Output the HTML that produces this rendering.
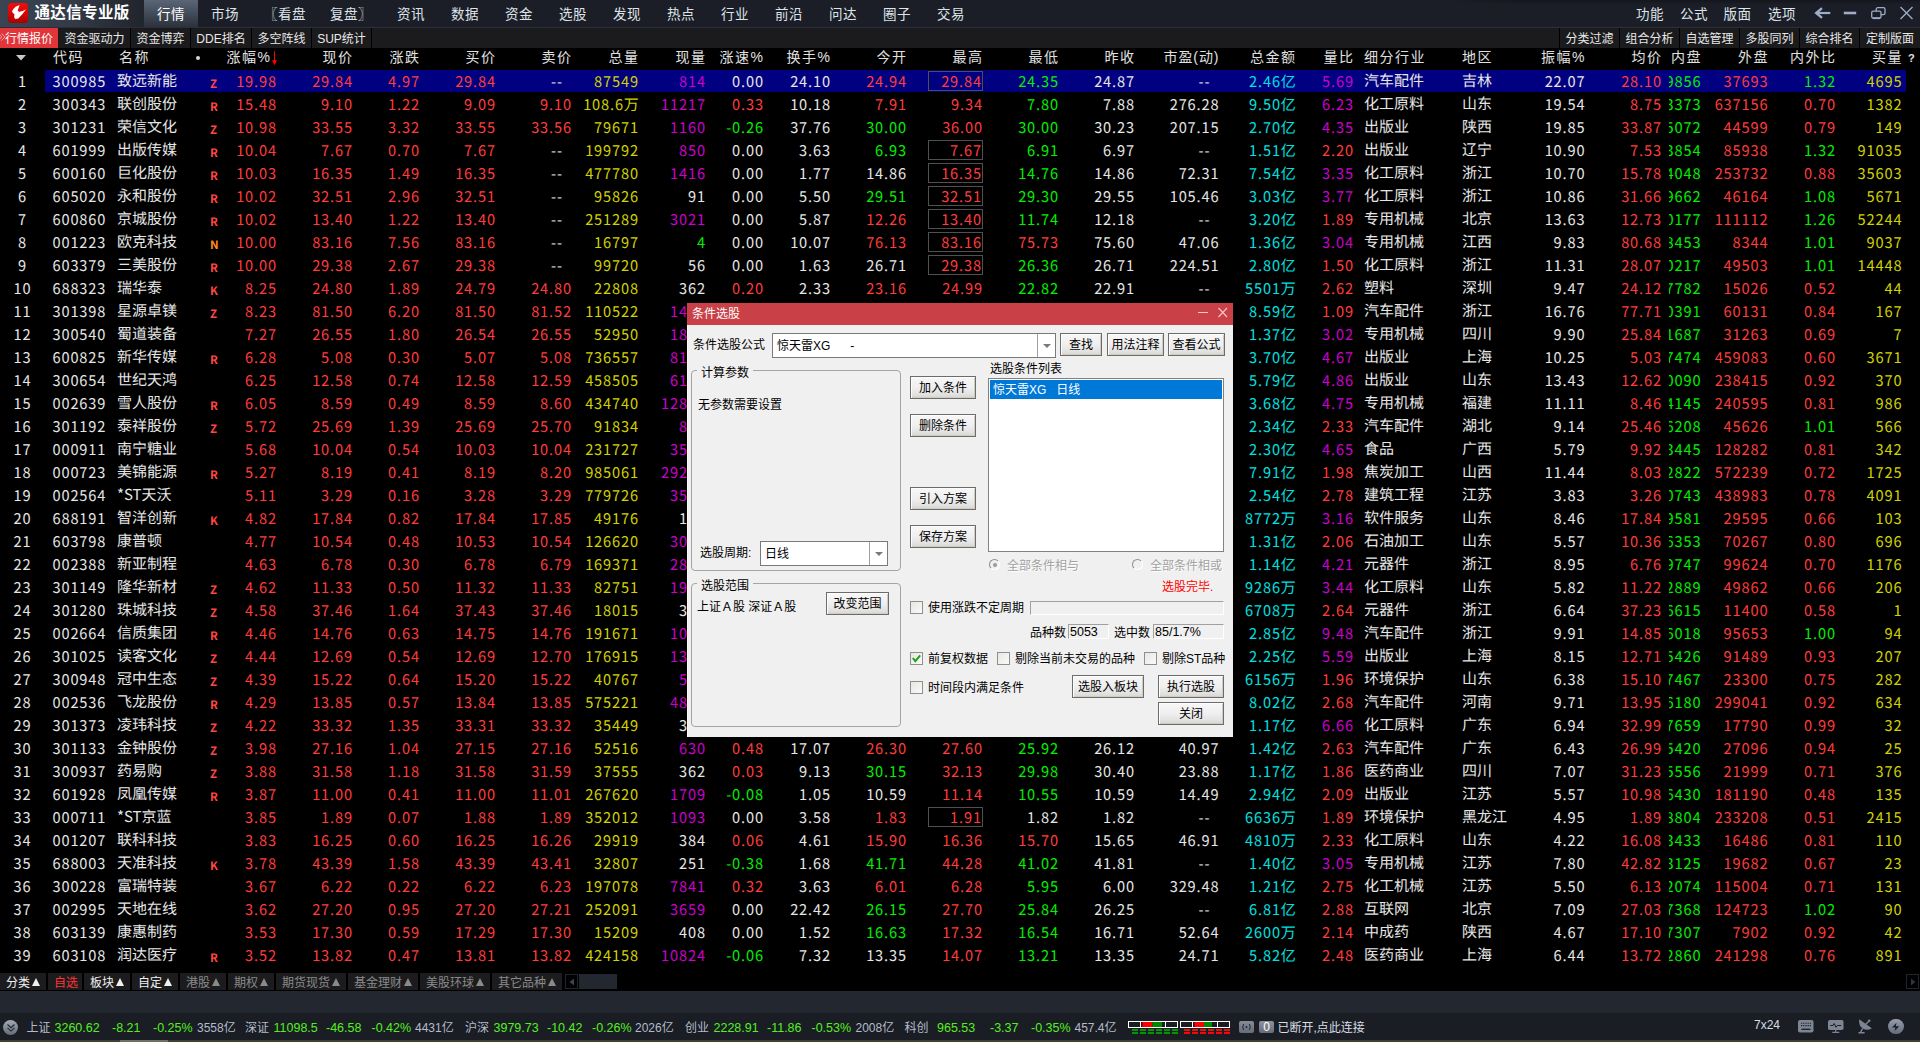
<!DOCTYPE html>
<html lang="zh"><head><meta charset="utf-8"><title>通达信专业版</title>
<style>

*{margin:0;padding:0;box-sizing:border-box}
html,body{width:1920px;height:1042px;overflow:hidden;background:#000}
body{font-family:"Liberation Sans","Noto Sans CJK SC",sans-serif;color:#e6e6e6}
#app{position:relative;width:1920px;height:1042px;overflow:hidden;background:#000}
.abs{position:absolute}
/* title bar */
#title{position:absolute;left:0;top:0;width:1920px;height:27px;background:#1b1e26}
#title .lg{position:absolute;left:0;top:0;width:144px;height:27px;background:linear-gradient(90deg,#3b4452 0%,#333b47 50%,#20242c 100%)}
#title .logo{position:absolute;left:8px;top:3px;width:20px;height:20px;border-radius:3.5px;background:linear-gradient(180deg,#f20d0d 0%,#d40606 55%,#a80000 100%)}
#title .nm{position:absolute;left:34.5px;top:0;height:25px;line-height:25px;font-size:15.5px;font-weight:bold;color:#fff;letter-spacing:.35px;white-space:nowrap}
#title .act{position:absolute;left:144px;top:0;width:54px;height:27px;background:linear-gradient(180deg,#5a6576 0%,#454e5c 45%,#2c323c 100%)}
.mi{position:absolute;top:0;height:27px;line-height:29px;font-size:13.5px;letter-spacing:.5px;color:#dfe3ea;white-space:nowrap;transform:translateX(-50%)}
#tline{position:absolute;left:0;top:27px;width:1920px;height:1px;background:#2a2f39}
#bar2{position:absolute;left:0;top:28px;width:1920px;height:20px;background:#1b1b1d}
.t2{position:absolute;top:0;height:20px;line-height:22px;font-size:12px;color:#e8e8e8;text-align:center;white-space:nowrap;border-right:1px solid #000}
.t2.on{background:#e1353a;color:#fff;border-right:none}
/* table */
#hdr{position:absolute;left:0;top:48px;width:1920px;height:22px;font-size:14px;line-height:22px;color:#e0e0e0}
.r{font-family:"Noto Sans CJK SC","Liberation Sans",sans-serif;text-rendering:geometricPrecision;position:absolute;left:0;width:1920px;height:23px;line-height:23px;font-size:14.6px;letter-spacing:0.85px}
.r.sel:before{content:"";position:absolute;left:45px;top:0;width:1861px;height:22px;background:#000080}
.c{position:absolute;top:.4px;white-space:nowrap}.c.zh{top:-1.3px}
.h{position:absolute;top:-2px;white-space:nowrap;letter-spacing:1.5px;margin-right:-1.5px}
.zh{font-size:15px;letter-spacing:0}
.fl{font-size:11.5px;font-weight:bold;letter-spacing:0;top:3px;color:#ff4646}
.rd{color:#ff3c3c}.gn{color:#00f000}.yl{color:#d2d200}.mg{color:#cc00cc}.cy{color:#00e0e0}.wh{color:#e6e6e6}
.bx{position:absolute;left:928px;top:1px;width:55px;height:20px;border:1px solid #505050}

.c-zf{right:1643.15px}
.h-zf{right:1644.00px}
.c-price{right:1567.15px}
.h-price{right:1568.00px}
.c-chg{right:1500.15px}
.h-chg{right:1501.00px}
.c-buy{right:1424.15px}
.h-buy{right:1425.00px}
.c-sell{right:1348.15px}
.h-sell{right:1349.00px}
.c-vol{right:1281.15px}
.h-vol{right:1282.00px}
.c-cur{right:1214.15px}
.h-cur{right:1215.00px}
.c-speed{right:1156.15px}
.h-speed{right:1157.00px}
.c-turn{right:1089.15px}
.h-turn{right:1090.00px}
.c-open{right:1013.15px}
.h-open{right:1014.00px}
.c-high{right:937.15px}
.h-high{right:938.00px}
.c-low{right:861.15px}
.h-low{right:862.00px}
.c-prev{right:785.15px}
.h-prev{right:786.00px}
.c-pe{right:700.65px}
.h-pe{right:701.50px}
.c-amount{right:624.15px}
.h-amount{right:625.00px}
.c-lb{right:566.15px}
.h-lb{right:567.00px}
.c-amp{right:334.65px}
.h-amp{right:335.50px}
.c-avg{right:258.15px}
.h-avg{right:259.00px}
.c-inner{right:218.65px}
.h-inner{right:219.50px}
.c-outer{right:151.65px}
.h-outer{right:152.50px}
.c-ratio{right:84.15px}
.h-ratio{right:85.00px}
.c-buyvol{right:17.65px}
.h-buyvol{right:18.50px}
.c-code{left:52.50px}
.c-name{left:117.00px}
.c-ind{left:1364.00px}
.c-reg{left:1462.00px}
.c-seq{left:0;width:45px;text-align:center}
.c-fl{left:210px}
.clip{position:absolute;left:1668.5px;top:0;width:33px;height:23px;overflow:hidden}.clip .c{right:0.15px}
#btabs{position:absolute;left:0;top:973px;width:1920px;height:17px;background:#000}
.bt{position:absolute;top:0;height:17px;line-height:20px;font-size:12px;color:#f0f0f0;background:#1c1c1e;padding-left:6px;white-space:nowrap;border-right:1px solid #000}
.bt.g{color:#8a8a8a}
.tri{display:inline-block;width:0;height:0;border-left:4.5px solid transparent;border-right:4.5px solid transparent;border-bottom:8px solid #f0f0f0;margin-left:2px;vertical-align:1px}
.bt.g .tri{border-bottom-color:#8a8a8a}
#band{position:absolute;left:0;top:991px;width:1920px;height:22px;background:#232830}
#status{position:absolute;left:0;top:1013px;width:1920px;height:27px;background:#1a1d24}
.s{position:absolute;top:0;height:27px;line-height:31px;font-size:12px;white-space:nowrap}
.s.l{color:#b4bccb}.s.g{color:#55ee22;font-size:12.5px}
#edge{position:absolute;left:0;top:1040px;width:1920px;height:2px;background:#3d402f}
#edge span{position:absolute;left:120px;top:0;width:48px;height:2px;background:#6f7067}
/* dialog */
#dlg{position:absolute;left:687px;top:303px;width:546px;height:434px;background:#f0f0f0;color:#000;font-size:12px;box-shadow:inset 1px 0 0 #fafafa}
#dlg .abs{position:absolute}
.dt{position:absolute;left:0;top:0;width:546px;height:21.5px;background:#c94047}
.dtt{position:absolute;left:5px;top:0;line-height:23px;color:#fff;font-size:12px}
.dl{position:absolute;line-height:20px;height:18px;white-space:nowrap;font-size:12px}
.gl{background:#f0f0f0;padding:0 4px}
.dis{color:#a2a2a2;text-shadow:1px 1px 0 #fff}
.cb{position:absolute;background:#fff;border:1px solid #7a7a7a}
.cbt{position:absolute;top:0;line-height:25px;font-size:12px;white-space:nowrap}
.cbs{position:absolute;top:0;width:1px;height:23px;background:#a0a0a0}
.cba{position:absolute;top:10px;width:0;height:0;border-left:4px solid transparent;border-right:4px solid transparent;border-top:4px solid #7a7a7a}
.btn{position:absolute;border:1px solid #6c6c6c;box-shadow:inset 1px 1px 0 #fdfdfd,inset -1px -1px 0 #cfccc2;background:linear-gradient(180deg,#f7f7f7 0%,#efefef 50%,#e3e3e3 80%,#d9d6cd 100%);text-align:center;line-height:22px;font-size:12px;white-space:nowrap}
.gb{position:absolute;border:1px solid #a5a5a5;border-radius:4px}
.lb{position:absolute;background:#fff;border:1px solid #828282}
.lbs{position:absolute;left:1px;top:1px;width:232px;height:19px;background:#0078d7;color:#fff;line-height:21px;padding-left:3px;white-space:nowrap}
.rdo{position:absolute;width:11px;height:11px;border-radius:6px;border:1px solid #8e8e8e;border-right-color:#fff;border-bottom-color:#fff;background:#f0f0f0}
.rdo b{position:absolute;left:3px;top:3px;width:3.5px;height:3.5px;border-radius:2px;background:#9a9a9a}
.ck{position:absolute;width:13px;height:13px;border:1px solid #8e8f8f;background:linear-gradient(135deg,#e8e6e0,#fafafa)}
.sk{position:absolute;border:1px solid;border-color:#a0a0a0 #fff #fff #a0a0a0;font-size:12.5px;line-height:14px}
.sk span{position:absolute;left:1px;top:0;white-space:nowrap}

</style></head>
<body><div id="app">
<div id="title">
<div class="lg"></div>
<div class="logo"><svg width="20" height="20" viewBox="0 0 20 20"><path d="M11.7 1.9L7.6 3.8Q4.6 6.2 4 8.4Q4.6 10 6.5 11.2L6.1 13.8Q6.5 15.8 7.4 16L10.3 15.4Q14.5 11.5 18.1 6.2Q14.5 8.6 11.6 8.8Q9.5 8.6 9.8 7Z" fill="#fff"/></svg></div>
<div class="nm">通达信专业版</div>
<div class="act"></div>
<div style="position:absolute;left:1455px;top:0;width:465px;height:4px;background:linear-gradient(180deg,rgba(10,11,14,.4),rgba(10,11,14,0));-webkit-mask-image:linear-gradient(90deg,transparent,#000 60px);mask-image:linear-gradient(90deg,transparent,#000 60px)"></div>
<span class="mi" style="left:171px;color:#fff">行情</span>
<span class="mi" style="left:225px">市场</span>
<span class="mi" style="left:285px">〖看盘</span>
<span class="mi" style="left:351px">复盘〗</span>
<span class="mi" style="left:411px">资讯</span>
<span class="mi" style="left:465px">数据</span>
<span class="mi" style="left:519px">资金</span>
<span class="mi" style="left:573px">选股</span>
<span class="mi" style="left:627px">发现</span>
<span class="mi" style="left:681px">热点</span>
<span class="mi" style="left:735px">行业</span>
<span class="mi" style="left:789px">前沿</span>
<span class="mi" style="left:843px">问达</span>
<span class="mi" style="left:897px">圈子</span>
<span class="mi" style="left:951px">交易</span>
<span class="mi" style="left:1650px">功能</span>
<span class="mi" style="left:1694px">公式</span>
<span class="mi" style="left:1737.5px">版面</span>
<span class="mi" style="left:1782px">选项</span>
<svg class="abs" style="left:1812px;top:4px" width="104" height="18" viewBox="0 0 104 18" fill="none" stroke="#9dadc8" stroke-width="1.6">
<path d="M4.5 9H18.3" stroke-width="2.2"/><path d="M10 4.2L4.2 9L10 13.8" stroke-width="2.4"/>
<path d="M31.8 9H44.2" stroke-width="2.6"/>
<rect x="64.2" y="3.7" width="8.8" height="7" rx="1.6" stroke-width="1.3"/><rect x="59.7" y="7.2" width="9.3" height="7" rx="1.6" stroke-width="1.3" fill="#1b1e26"/><path d="M60.6 14.2H68.2" stroke-width="1.8"/>
<path d="M88.5 3L100.5 15M100.5 3L88.5 15" stroke-width="1.3"/>
</svg>
</div>
<div id="tline"></div>
<div id="bar2">
<span class="t2 on" style="left:0;width:58px"><svg style="position:absolute;left:0;top:0" width="6" height="20" viewBox="0 0 6 20" fill="none" stroke="#f3a3a6" stroke-width="1"><path d="M-1.8 5.5L1.8 9L-1.8 12.5M1.4 5.5L5 9L1.4 12.5"/></svg><span style="position:absolute;left:5px;top:0">行情报价</span></span>
<span class="t2" style="left:59px;width:72px">资金驱动力</span>
<span class="t2" style="left:131px;width:60px">资金博弈</span>
<span class="t2" style="left:191px;width:61px">DDE排名</span>
<span class="t2" style="left:252px;width:60px">多空阵线</span>
<span class="t2" style="left:312px;width:60px">SUP统计</span>
<span class="t2" style="left:1559px;width:1px"></span>
<span class="t2" style="left:1560px;width:60px">分类过滤</span>
<span class="t2" style="left:1620px;width:60px">组合分析</span>
<span class="t2" style="left:1680px;width:60px">自选管理</span>
<span class="t2" style="left:1740px;width:60px">多股同列</span>
<span class="t2" style="left:1800px;width:60px">综合排名</span>
<span class="t2" style="left:1860px;width:60px;border-right:none">定制版面</span>
</div>

<div id="hdr">
<svg class="abs" style="left:16px;top:7px" width="10" height="6" viewBox="0 0 10 6"><path d="M0 0H10L5 5.5Z" fill="#c8c8c8"/></svg>
<span class="h" style="left:53px">代码</span><span class="h" style="left:119px">名称</span>
<span class="abs" style="left:196px;top:8px;width:4px;height:4px;border-radius:2px;background:#d8d8d8"></span>
<span class="h" style="right:1650.0px">涨幅%</span>
<svg class="abs" style="left:271px;top:3px" width="7" height="15" viewBox="0 0 7 15"><path d="M3.5 0.2V13" stroke="#ff0000" stroke-width="1"/><path d="M1 9.2H6L3.5 14.2Z" fill="#ff0000"/></svg>
<span class="h h-price">现价</span>
<span class="h h-chg">涨跌</span>
<span class="h h-buy">买价</span>
<span class="h h-sell">卖价</span>
<span class="h h-vol">总量</span>
<span class="h h-cur">现量</span>
<span class="h h-speed">涨速%</span>
<span class="h h-turn">换手%</span>
<span class="h h-open">今开</span>
<span class="h h-high">最高</span>
<span class="h h-low">最低</span>
<span class="h h-prev">昨收</span>
<span class="h h-pe" style="letter-spacing:.9px;margin-right:-.9px">市盈(动)</span>
<span class="h h-amount">总金额</span>
<span class="h h-lb">量比</span>
<span class="h h-amp">振幅%</span>
<span class="h h-avg">均价</span>
<span class="h h-inner">内盘</span>
<span class="h h-outer">外盘</span>
<span class="h h-ratio">内外比</span>
<span class="h h-buyvol">买量</span>
<span class="h" style="left:1364px">细分行业</span><span class="h" style="left:1462px">地区</span>
<span class="h" style="left:1908px;font-size:11px;font-weight:bold;top:-1px">?</span>
</div>
<div class="r sel" style="top:70px"><span class="c c-seq wh">1</span><span class="c c-code wh">300985</span><span class="c c-name zh wh">致远新能</span><span class="c c-fl fl">Z</span><span class="c c-zf rd">19.98</span><span class="c c-price rd">29.84</span><span class="c c-chg rd">4.97</span><span class="c c-buy rd">29.84</span><span class="c c-sell wh" style="margin-right:9px">--</span><span class="c c-vol yl">87549</span><span class="c c-cur mg">814</span><span class="c c-speed wh">0.00</span><span class="c c-turn wh">24.10</span><span class="c c-open rd">24.94</span><span class="bx"></span><span class="c c-high rd" style="margin-right:1px">29.84</span><span class="c c-low gn">24.35</span><span class="c c-prev wh">24.87</span><span class="c c-pe wh" style="margin-right:9px">--</span><span class="c c-amount cy">2.46<span class="zh">亿</span></span><span class="c c-lb mg">5.69</span><span class="c c-ind zh wh">汽车配件</span><span class="c c-reg zh wh">吉林</span><span class="c c-amp wh">22.07</span><span class="c c-avg rd">28.10</span><span class="clip"><span class="c gn">49856</span></span><span class="c c-outer rd">37693</span><span class="c c-ratio gn">1.32</span><span class="c c-buyvol yl">4695</span></div>
<div class="r" style="top:93px"><span class="c c-seq wh">2</span><span class="c c-code wh">300343</span><span class="c c-name zh wh">联创股份</span><span class="c c-fl fl">R</span><span class="c c-zf rd">15.48</span><span class="c c-price rd">9.10</span><span class="c c-chg rd">1.22</span><span class="c c-buy rd">9.09</span><span class="c c-sell rd">9.10</span><span class="c c-vol yl">108.6<span class="zh">万</span></span><span class="c c-cur mg">11217</span><span class="c c-speed rd">0.33</span><span class="c c-turn wh">10.18</span><span class="c c-open rd">7.91</span><span class="c c-high rd">9.34</span><span class="c c-low gn">7.80</span><span class="c c-prev wh">7.88</span><span class="c c-pe wh">276.28</span><span class="c c-amount cy">9.50<span class="zh">亿</span></span><span class="c c-lb mg">6.23</span><span class="c c-ind zh wh">化工原料</span><span class="c c-reg zh wh">山东</span><span class="c c-amp wh">19.54</span><span class="c c-avg rd">8.75</span><span class="clip"><span class="c gn">443373</span></span><span class="c c-outer rd">637156</span><span class="c c-ratio rd">0.70</span><span class="c c-buyvol yl">1382</span></div>
<div class="r" style="top:116px"><span class="c c-seq wh">3</span><span class="c c-code wh">301231</span><span class="c c-name zh wh">荣信文化</span><span class="c c-fl fl">Z</span><span class="c c-zf rd">10.98</span><span class="c c-price rd">33.55</span><span class="c c-chg rd">3.32</span><span class="c c-buy rd">33.55</span><span class="c c-sell rd">33.56</span><span class="c c-vol yl">79671</span><span class="c c-cur mg">1160</span><span class="c c-speed gn">-0.26</span><span class="c c-turn wh">37.76</span><span class="c c-open gn">30.00</span><span class="c c-high rd">36.00</span><span class="c c-low gn">30.00</span><span class="c c-prev wh">30.23</span><span class="c c-pe wh">207.15</span><span class="c c-amount cy">2.70<span class="zh">亿</span></span><span class="c c-lb mg">4.35</span><span class="c c-ind zh wh">出版业</span><span class="c c-reg zh wh">陕西</span><span class="c c-amp wh">19.85</span><span class="c c-avg rd">33.87</span><span class="clip"><span class="c gn">35072</span></span><span class="c c-outer rd">44599</span><span class="c c-ratio rd">0.79</span><span class="c c-buyvol yl">149</span></div>
<div class="r" style="top:139px"><span class="c c-seq wh">4</span><span class="c c-code wh">601999</span><span class="c c-name zh wh">出版传媒</span><span class="c c-fl fl">R</span><span class="c c-zf rd">10.04</span><span class="c c-price rd">7.67</span><span class="c c-chg rd">0.70</span><span class="c c-buy rd">7.67</span><span class="c c-sell wh" style="margin-right:9px">--</span><span class="c c-vol yl">199792</span><span class="c c-cur mg">850</span><span class="c c-speed wh">0.00</span><span class="c c-turn wh">3.63</span><span class="c c-open gn">6.93</span><span class="bx"></span><span class="c c-high rd" style="margin-right:1px">7.67</span><span class="c c-low gn">6.91</span><span class="c c-prev wh">6.97</span><span class="c c-pe wh" style="margin-right:9px">--</span><span class="c c-amount cy">1.51<span class="zh">亿</span></span><span class="c c-lb rd">2.20</span><span class="c c-ind zh wh">出版业</span><span class="c c-reg zh wh">辽宁</span><span class="c c-amp wh">10.90</span><span class="c c-avg rd">7.53</span><span class="clip"><span class="c gn">113854</span></span><span class="c c-outer rd">85938</span><span class="c c-ratio gn">1.32</span><span class="c c-buyvol yl">91035</span></div>
<div class="r" style="top:162px"><span class="c c-seq wh">5</span><span class="c c-code wh">600160</span><span class="c c-name zh wh">巨化股份</span><span class="c c-fl fl">R</span><span class="c c-zf rd">10.03</span><span class="c c-price rd">16.35</span><span class="c c-chg rd">1.49</span><span class="c c-buy rd">16.35</span><span class="c c-sell wh" style="margin-right:9px">--</span><span class="c c-vol yl">477780</span><span class="c c-cur mg">1416</span><span class="c c-speed wh">0.00</span><span class="c c-turn wh">1.77</span><span class="c c-open wh">14.86</span><span class="bx"></span><span class="c c-high rd" style="margin-right:1px">16.35</span><span class="c c-low gn">14.76</span><span class="c c-prev wh">14.86</span><span class="c c-pe wh">72.31</span><span class="c c-amount cy">7.54<span class="zh">亿</span></span><span class="c c-lb mg">3.35</span><span class="c c-ind zh wh">化工原料</span><span class="c c-reg zh wh">浙江</span><span class="c c-amp wh">10.70</span><span class="c c-avg rd">15.78</span><span class="clip"><span class="c gn">224048</span></span><span class="c c-outer rd">253732</span><span class="c c-ratio rd">0.88</span><span class="c c-buyvol yl">35603</span></div>
<div class="r" style="top:185px"><span class="c c-seq wh">6</span><span class="c c-code wh">605020</span><span class="c c-name zh wh">永和股份</span><span class="c c-fl fl">R</span><span class="c c-zf rd">10.02</span><span class="c c-price rd">32.51</span><span class="c c-chg rd">2.96</span><span class="c c-buy rd">32.51</span><span class="c c-sell wh" style="margin-right:9px">--</span><span class="c c-vol yl">95826</span><span class="c c-cur wh">91</span><span class="c c-speed wh">0.00</span><span class="c c-turn wh">5.50</span><span class="c c-open gn">29.51</span><span class="bx"></span><span class="c c-high rd" style="margin-right:1px">32.51</span><span class="c c-low gn">29.30</span><span class="c c-prev wh">29.55</span><span class="c c-pe wh">105.46</span><span class="c c-amount cy">3.03<span class="zh">亿</span></span><span class="c c-lb mg">3.77</span><span class="c c-ind zh wh">化工原料</span><span class="c c-reg zh wh">浙江</span><span class="c c-amp wh">10.86</span><span class="c c-avg rd">31.66</span><span class="clip"><span class="c gn">49662</span></span><span class="c c-outer rd">46164</span><span class="c c-ratio gn">1.08</span><span class="c c-buyvol yl">5671</span></div>
<div class="r" style="top:208px"><span class="c c-seq wh">7</span><span class="c c-code wh">600860</span><span class="c c-name zh wh">京城股份</span><span class="c c-fl fl">R</span><span class="c c-zf rd">10.02</span><span class="c c-price rd">13.40</span><span class="c c-chg rd">1.22</span><span class="c c-buy rd">13.40</span><span class="c c-sell wh" style="margin-right:9px">--</span><span class="c c-vol yl">251289</span><span class="c c-cur mg">3021</span><span class="c c-speed wh">0.00</span><span class="c c-turn wh">5.87</span><span class="c c-open rd">12.26</span><span class="bx"></span><span class="c c-high rd" style="margin-right:1px">13.40</span><span class="c c-low gn">11.74</span><span class="c c-prev wh">12.18</span><span class="c c-pe wh" style="margin-right:9px">--</span><span class="c c-amount cy">3.20<span class="zh">亿</span></span><span class="c c-lb rd">1.89</span><span class="c c-ind zh wh">专用机械</span><span class="c c-reg zh wh">北京</span><span class="c c-amp wh">13.63</span><span class="c c-avg rd">12.73</span><span class="clip"><span class="c gn">140177</span></span><span class="c c-outer rd">111112</span><span class="c c-ratio gn">1.26</span><span class="c c-buyvol yl">52244</span></div>
<div class="r" style="top:231px"><span class="c c-seq wh">8</span><span class="c c-code wh">001223</span><span class="c c-name zh wh">欧克科技</span><span class="c c-fl fl" style="color:#ff8c1a">N</span><span class="c c-zf rd">10.00</span><span class="c c-price rd">83.16</span><span class="c c-chg rd">7.56</span><span class="c c-buy rd">83.16</span><span class="c c-sell wh" style="margin-right:9px">--</span><span class="c c-vol yl">16797</span><span class="c c-cur gn">4</span><span class="c c-speed wh">0.00</span><span class="c c-turn wh">10.07</span><span class="c c-open rd">76.13</span><span class="bx"></span><span class="c c-high rd" style="margin-right:1px">83.16</span><span class="c c-low rd">75.73</span><span class="c c-prev wh">75.60</span><span class="c c-pe wh">47.06</span><span class="c c-amount cy">1.36<span class="zh">亿</span></span><span class="c c-lb mg">3.04</span><span class="c c-ind zh wh">专用机械</span><span class="c c-reg zh wh">江西</span><span class="c c-amp wh">9.83</span><span class="c c-avg rd">80.68</span><span class="clip"><span class="c gn">8453</span></span><span class="c c-outer rd">8344</span><span class="c c-ratio gn">1.01</span><span class="c c-buyvol yl">9037</span></div>
<div class="r" style="top:254px"><span class="c c-seq wh">9</span><span class="c c-code wh">603379</span><span class="c c-name zh wh">三美股份</span><span class="c c-fl fl">R</span><span class="c c-zf rd">10.00</span><span class="c c-price rd">29.38</span><span class="c c-chg rd">2.67</span><span class="c c-buy rd">29.38</span><span class="c c-sell wh" style="margin-right:9px">--</span><span class="c c-vol yl">99720</span><span class="c c-cur wh">56</span><span class="c c-speed wh">0.00</span><span class="c c-turn wh">1.63</span><span class="c c-open wh">26.71</span><span class="bx"></span><span class="c c-high rd" style="margin-right:1px">29.38</span><span class="c c-low gn">26.36</span><span class="c c-prev wh">26.71</span><span class="c c-pe wh">224.51</span><span class="c c-amount cy">2.80<span class="zh">亿</span></span><span class="c c-lb rd">1.50</span><span class="c c-ind zh wh">化工原料</span><span class="c c-reg zh wh">浙江</span><span class="c c-amp wh">11.31</span><span class="c c-avg rd">28.07</span><span class="clip"><span class="c gn">50217</span></span><span class="c c-outer rd">49503</span><span class="c c-ratio gn">1.01</span><span class="c c-buyvol yl">14448</span></div>
<div class="r" style="top:277px"><span class="c c-seq wh">10</span><span class="c c-code wh">688323</span><span class="c c-name zh wh">瑞华泰</span><span class="c c-fl fl">K</span><span class="c c-zf rd">8.25</span><span class="c c-price rd">24.80</span><span class="c c-chg rd">1.89</span><span class="c c-buy rd">24.79</span><span class="c c-sell rd">24.80</span><span class="c c-vol yl">22808</span><span class="c c-cur wh">362</span><span class="c c-speed rd">0.20</span><span class="c c-turn wh">2.33</span><span class="c c-open rd">23.16</span><span class="c c-high rd">24.99</span><span class="c c-low gn">22.82</span><span class="c c-prev wh">22.91</span><span class="c c-pe wh" style="margin-right:9px">--</span><span class="c c-amount cy">5501<span class="zh">万</span></span><span class="c c-lb rd">2.62</span><span class="c c-ind zh wh">塑料</span><span class="c c-reg zh wh">深圳</span><span class="c c-amp wh">9.47</span><span class="c c-avg rd">24.12</span><span class="clip"><span class="c gn">7782</span></span><span class="c c-outer rd">15026</span><span class="c c-ratio rd">0.52</span><span class="c c-buyvol yl">44</span></div>
<div class="r" style="top:300px"><span class="c c-seq wh">11</span><span class="c c-code wh">301398</span><span class="c c-name zh wh">星源卓镁</span><span class="c c-fl fl">Z</span><span class="c c-zf rd">8.23</span><span class="c c-price rd">81.50</span><span class="c c-chg rd">6.20</span><span class="c c-buy rd">81.50</span><span class="c c-sell rd">81.52</span><span class="c c-vol yl">110522</span><span class="c c-cur mg">1432</span><span class="c c-amount cy">8.59<span class="zh">亿</span></span><span class="c c-lb rd">1.09</span><span class="c c-ind zh wh">汽车配件</span><span class="c c-reg zh wh">浙江</span><span class="c c-amp wh">16.76</span><span class="c c-avg rd">77.71</span><span class="clip"><span class="c gn">50391</span></span><span class="c c-outer rd">60131</span><span class="c c-ratio rd">0.84</span><span class="c c-buyvol yl">167</span></div>
<div class="r" style="top:323px"><span class="c c-seq wh">12</span><span class="c c-code wh">300540</span><span class="c c-name zh wh">蜀道装备</span><span class="c c-zf rd">7.27</span><span class="c c-price rd">26.55</span><span class="c c-chg rd">1.80</span><span class="c c-buy rd">26.54</span><span class="c c-sell rd">26.55</span><span class="c c-vol yl">52950</span><span class="c c-cur mg">1850</span><span class="c c-amount cy">1.37<span class="zh">亿</span></span><span class="c c-lb mg">3.02</span><span class="c c-ind zh wh">专用机械</span><span class="c c-reg zh wh">四川</span><span class="c c-amp wh">9.90</span><span class="c c-avg rd">25.84</span><span class="clip"><span class="c gn">21687</span></span><span class="c c-outer rd">31263</span><span class="c c-ratio rd">0.69</span><span class="c c-buyvol yl">7</span></div>
<div class="r" style="top:346px"><span class="c c-seq wh">13</span><span class="c c-code wh">600825</span><span class="c c-name zh wh">新华传媒</span><span class="c c-fl fl">R</span><span class="c c-zf rd">6.28</span><span class="c c-price rd">5.08</span><span class="c c-chg rd">0.30</span><span class="c c-buy rd">5.07</span><span class="c c-sell rd">5.08</span><span class="c c-vol yl">736557</span><span class="c c-cur mg">8120</span><span class="c c-amount cy">3.70<span class="zh">亿</span></span><span class="c c-lb mg">4.67</span><span class="c c-ind zh wh">出版业</span><span class="c c-reg zh wh">上海</span><span class="c c-amp wh">10.25</span><span class="c c-avg rd">5.03</span><span class="clip"><span class="c gn">277474</span></span><span class="c c-outer rd">459083</span><span class="c c-ratio rd">0.60</span><span class="c c-buyvol yl">3671</span></div>
<div class="r" style="top:369px"><span class="c c-seq wh">14</span><span class="c c-code wh">300654</span><span class="c c-name zh wh">世纪天鸿</span><span class="c c-zf rd">6.25</span><span class="c c-price rd">12.58</span><span class="c c-chg rd">0.74</span><span class="c c-buy rd">12.58</span><span class="c c-sell rd">12.59</span><span class="c c-vol yl">458505</span><span class="c c-cur mg">6105</span><span class="c c-amount cy">5.79<span class="zh">亿</span></span><span class="c c-lb mg">4.86</span><span class="c c-ind zh wh">出版业</span><span class="c c-reg zh wh">山东</span><span class="c c-amp wh">13.43</span><span class="c c-avg rd">12.62</span><span class="clip"><span class="c gn">220090</span></span><span class="c c-outer rd">238415</span><span class="c c-ratio rd">0.92</span><span class="c c-buyvol yl">370</span></div>
<div class="r" style="top:392px"><span class="c c-seq wh">15</span><span class="c c-code wh">002639</span><span class="c c-name zh wh">雪人股份</span><span class="c c-fl fl">R</span><span class="c c-zf rd">6.05</span><span class="c c-price rd">8.59</span><span class="c c-chg rd">0.49</span><span class="c c-buy rd">8.59</span><span class="c c-sell rd">8.60</span><span class="c c-vol yl">434740</span><span class="c c-cur mg">12833</span><span class="c c-amount cy">3.68<span class="zh">亿</span></span><span class="c c-lb mg">4.75</span><span class="c c-ind zh wh">专用机械</span><span class="c c-reg zh wh">福建</span><span class="c c-amp wh">11.11</span><span class="c c-avg rd">8.46</span><span class="clip"><span class="c gn">194145</span></span><span class="c c-outer rd">240595</span><span class="c c-ratio rd">0.81</span><span class="c c-buyvol yl">986</span></div>
<div class="r" style="top:415px"><span class="c c-seq wh">16</span><span class="c c-code wh">301192</span><span class="c c-name zh wh">泰祥股份</span><span class="c c-fl fl">Z</span><span class="c c-zf rd">5.72</span><span class="c c-price rd">25.69</span><span class="c c-chg rd">1.39</span><span class="c c-buy rd">25.69</span><span class="c c-sell rd">25.70</span><span class="c c-vol yl">91834</span><span class="c c-cur mg">825</span><span class="c c-amount cy">2.34<span class="zh">亿</span></span><span class="c c-lb rd">2.33</span><span class="c c-ind zh wh">汽车配件</span><span class="c c-reg zh wh">湖北</span><span class="c c-amp wh">9.14</span><span class="c c-avg rd">25.46</span><span class="clip"><span class="c gn">46208</span></span><span class="c c-outer rd">45626</span><span class="c c-ratio gn">1.01</span><span class="c c-buyvol yl">566</span></div>
<div class="r" style="top:438px"><span class="c c-seq wh">17</span><span class="c c-code wh">000911</span><span class="c c-name zh wh">南宁糖业</span><span class="c c-zf rd">5.68</span><span class="c c-price rd">10.04</span><span class="c c-chg rd">0.54</span><span class="c c-buy rd">10.03</span><span class="c c-sell rd">10.04</span><span class="c c-vol yl">231727</span><span class="c c-cur mg">3517</span><span class="c c-amount cy">2.30<span class="zh">亿</span></span><span class="c c-lb mg">4.65</span><span class="c c-ind zh wh">食品</span><span class="c c-reg zh wh">广西</span><span class="c c-amp wh">5.79</span><span class="c c-avg rd">9.92</span><span class="clip"><span class="c gn">103445</span></span><span class="c c-outer rd">128282</span><span class="c c-ratio rd">0.81</span><span class="c c-buyvol yl">342</span></div>
<div class="r" style="top:461px"><span class="c c-seq wh">18</span><span class="c c-code wh">000723</span><span class="c c-name zh wh">美锦能源</span><span class="c c-fl fl">R</span><span class="c c-zf rd">5.27</span><span class="c c-price rd">8.19</span><span class="c c-chg rd">0.41</span><span class="c c-buy rd">8.19</span><span class="c c-sell rd">8.20</span><span class="c c-vol yl">985061</span><span class="c c-cur mg">29215</span><span class="c c-amount cy">7.91<span class="zh">亿</span></span><span class="c c-lb rd">1.98</span><span class="c c-ind zh wh">焦炭加工</span><span class="c c-reg zh wh">山西</span><span class="c c-amp wh">11.44</span><span class="c c-avg rd">8.03</span><span class="clip"><span class="c gn">412822</span></span><span class="c c-outer rd">572239</span><span class="c c-ratio rd">0.72</span><span class="c c-buyvol yl">1725</span></div>
<div class="r" style="top:484px"><span class="c c-seq wh">19</span><span class="c c-code wh">002564</span><span class="c c-name zh wh">*ST天沃</span><span class="c c-zf rd">5.11</span><span class="c c-price rd">3.29</span><span class="c c-chg rd">0.16</span><span class="c c-buy rd">3.28</span><span class="c c-sell rd">3.29</span><span class="c c-vol yl">779726</span><span class="c c-cur mg">3526</span><span class="c c-amount cy">2.54<span class="zh">亿</span></span><span class="c c-lb rd">2.78</span><span class="c c-ind zh wh">建筑工程</span><span class="c c-reg zh wh">江苏</span><span class="c c-amp wh">3.83</span><span class="c c-avg rd">3.26</span><span class="clip"><span class="c gn">340743</span></span><span class="c c-outer rd">438983</span><span class="c c-ratio rd">0.78</span><span class="c c-buyvol yl">4091</span></div>
<div class="r" style="top:507px"><span class="c c-seq wh">20</span><span class="c c-code wh">688191</span><span class="c c-name zh wh">智洋创新</span><span class="c c-fl fl">K</span><span class="c c-zf rd">4.82</span><span class="c c-price rd">17.84</span><span class="c c-chg rd">0.82</span><span class="c c-buy rd">17.84</span><span class="c c-sell rd">17.85</span><span class="c c-vol yl">49176</span><span class="c c-cur wh">120</span><span class="c c-amount cy">8772<span class="zh">万</span></span><span class="c c-lb mg">3.16</span><span class="c c-ind zh wh">软件服务</span><span class="c c-reg zh wh">山东</span><span class="c c-amp wh">8.46</span><span class="c c-avg rd">17.84</span><span class="clip"><span class="c gn">19581</span></span><span class="c c-outer rd">29595</span><span class="c c-ratio rd">0.66</span><span class="c c-buyvol yl">103</span></div>
<div class="r" style="top:530px"><span class="c c-seq wh">21</span><span class="c c-code wh">603798</span><span class="c c-name zh wh">康普顿</span><span class="c c-zf rd">4.77</span><span class="c c-price rd">10.54</span><span class="c c-chg rd">0.48</span><span class="c c-buy rd">10.53</span><span class="c c-sell rd">10.54</span><span class="c c-vol yl">126620</span><span class="c c-cur mg">3021</span><span class="c c-amount cy">1.31<span class="zh">亿</span></span><span class="c c-lb rd">2.06</span><span class="c c-ind zh wh">石油加工</span><span class="c c-reg zh wh">山东</span><span class="c c-amp wh">5.57</span><span class="c c-avg rd">10.36</span><span class="clip"><span class="c gn">56353</span></span><span class="c c-outer rd">70267</span><span class="c c-ratio rd">0.80</span><span class="c c-buyvol yl">696</span></div>
<div class="r" style="top:553px"><span class="c c-seq wh">22</span><span class="c c-code wh">002388</span><span class="c c-name zh wh">新亚制程</span><span class="c c-zf rd">4.63</span><span class="c c-price rd">6.78</span><span class="c c-chg rd">0.30</span><span class="c c-buy rd">6.78</span><span class="c c-sell rd">6.79</span><span class="c c-vol yl">169371</span><span class="c c-cur mg">2846</span><span class="c c-amount cy">1.14<span class="zh">亿</span></span><span class="c c-lb mg">4.21</span><span class="c c-ind zh wh">元器件</span><span class="c c-reg zh wh">浙江</span><span class="c c-amp wh">8.95</span><span class="c c-avg rd">6.76</span><span class="clip"><span class="c gn">69747</span></span><span class="c c-outer rd">99624</span><span class="c c-ratio rd">0.70</span><span class="c c-buyvol yl">1176</span></div>
<div class="r" style="top:576px"><span class="c c-seq wh">23</span><span class="c c-code wh">301149</span><span class="c c-name zh wh">隆华新材</span><span class="c c-fl fl">Z</span><span class="c c-zf rd">4.62</span><span class="c c-price rd">11.33</span><span class="c c-chg rd">0.50</span><span class="c c-buy rd">11.32</span><span class="c c-sell rd">11.33</span><span class="c c-vol yl">82751</span><span class="c c-cur mg">1925</span><span class="c c-amount cy">9286<span class="zh">万</span></span><span class="c c-lb mg">3.44</span><span class="c c-ind zh wh">化工原料</span><span class="c c-reg zh wh">山东</span><span class="c c-amp wh">5.82</span><span class="c c-avg rd">11.22</span><span class="clip"><span class="c gn">32889</span></span><span class="c c-outer rd">49862</span><span class="c c-ratio rd">0.66</span><span class="c c-buyvol yl">206</span></div>
<div class="r" style="top:599px"><span class="c c-seq wh">24</span><span class="c c-code wh">301280</span><span class="c c-name zh wh">珠城科技</span><span class="c c-fl fl">Z</span><span class="c c-zf rd">4.58</span><span class="c c-price rd">37.46</span><span class="c c-chg rd">1.64</span><span class="c c-buy rd">37.43</span><span class="c c-sell rd">37.46</span><span class="c c-vol yl">18015</span><span class="c c-cur wh">302</span><span class="c c-amount cy">6708<span class="zh">万</span></span><span class="c c-lb rd">2.64</span><span class="c c-ind zh wh">元器件</span><span class="c c-reg zh wh">浙江</span><span class="c c-amp wh">6.64</span><span class="c c-avg rd">37.23</span><span class="clip"><span class="c gn">6615</span></span><span class="c c-outer rd">11400</span><span class="c c-ratio rd">0.58</span><span class="c c-buyvol yl">1</span></div>
<div class="r" style="top:622px"><span class="c c-seq wh">25</span><span class="c c-code wh">002664</span><span class="c c-name zh wh">信质集团</span><span class="c c-fl fl">R</span><span class="c c-zf rd">4.46</span><span class="c c-price rd">14.76</span><span class="c c-chg rd">0.63</span><span class="c c-buy rd">14.75</span><span class="c c-sell rd">14.76</span><span class="c c-vol yl">191671</span><span class="c c-cur mg">1032</span><span class="c c-amount cy">2.85<span class="zh">亿</span></span><span class="c c-lb mg">9.48</span><span class="c c-ind zh wh">汽车配件</span><span class="c c-reg zh wh">浙江</span><span class="c c-amp wh">9.91</span><span class="c c-avg rd">14.85</span><span class="clip"><span class="c gn">96018</span></span><span class="c c-outer rd">95653</span><span class="c c-ratio gn">1.00</span><span class="c c-buyvol yl">94</span></div>
<div class="r" style="top:645px"><span class="c c-seq wh">26</span><span class="c c-code wh">301025</span><span class="c c-name zh wh">读客文化</span><span class="c c-fl fl">Z</span><span class="c c-zf rd">4.44</span><span class="c c-price rd">12.69</span><span class="c c-chg rd">0.54</span><span class="c c-buy rd">12.69</span><span class="c c-sell rd">12.70</span><span class="c c-vol yl">176915</span><span class="c c-cur mg">1385</span><span class="c c-amount cy">2.25<span class="zh">亿</span></span><span class="c c-lb mg">5.59</span><span class="c c-ind zh wh">出版业</span><span class="c c-reg zh wh">上海</span><span class="c c-amp wh">8.15</span><span class="c c-avg rd">12.71</span><span class="clip"><span class="c gn">85426</span></span><span class="c c-outer rd">91489</span><span class="c c-ratio rd">0.93</span><span class="c c-buyvol yl">207</span></div>
<div class="r" style="top:668px"><span class="c c-seq wh">27</span><span class="c c-code wh">300948</span><span class="c c-name zh wh">冠中生态</span><span class="c c-fl fl">Z</span><span class="c c-zf rd">4.39</span><span class="c c-price rd">15.22</span><span class="c c-chg rd">0.64</span><span class="c c-buy rd">15.20</span><span class="c c-sell rd">15.22</span><span class="c c-vol yl">40767</span><span class="c c-cur mg">528</span><span class="c c-amount cy">6156<span class="zh">万</span></span><span class="c c-lb rd">1.96</span><span class="c c-ind zh wh">环境保护</span><span class="c c-reg zh wh">山东</span><span class="c c-amp wh">6.38</span><span class="c c-avg rd">15.10</span><span class="clip"><span class="c gn">17467</span></span><span class="c c-outer rd">23300</span><span class="c c-ratio rd">0.75</span><span class="c c-buyvol yl">282</span></div>
<div class="r" style="top:691px"><span class="c c-seq wh">28</span><span class="c c-code wh">002536</span><span class="c c-name zh wh">飞龙股份</span><span class="c c-fl fl">R</span><span class="c c-zf rd">4.29</span><span class="c c-price rd">13.85</span><span class="c c-chg rd">0.57</span><span class="c c-buy rd">13.84</span><span class="c c-sell rd">13.85</span><span class="c c-vol yl">575221</span><span class="c c-cur mg">4817</span><span class="c c-amount cy">8.02<span class="zh">亿</span></span><span class="c c-lb rd">2.68</span><span class="c c-ind zh wh">汽车配件</span><span class="c c-reg zh wh">河南</span><span class="c c-amp wh">9.71</span><span class="c c-avg rd">13.95</span><span class="clip"><span class="c gn">276180</span></span><span class="c c-outer rd">299041</span><span class="c c-ratio rd">0.92</span><span class="c c-buyvol yl">634</span></div>
<div class="r" style="top:714px"><span class="c c-seq wh">29</span><span class="c c-code wh">301373</span><span class="c c-name zh wh">凌玮科技</span><span class="c c-fl fl">Z</span><span class="c c-zf rd">4.22</span><span class="c c-price rd">33.32</span><span class="c c-chg rd">1.35</span><span class="c c-buy rd">33.31</span><span class="c c-sell rd">33.32</span><span class="c c-vol yl">35449</span><span class="c c-cur wh">305</span><span class="c c-amount cy">1.17<span class="zh">亿</span></span><span class="c c-lb mg">6.66</span><span class="c c-ind zh wh">化工原料</span><span class="c c-reg zh wh">广东</span><span class="c c-amp wh">6.94</span><span class="c c-avg rd">32.99</span><span class="clip"><span class="c gn">17659</span></span><span class="c c-outer rd">17790</span><span class="c c-ratio rd">0.99</span><span class="c c-buyvol yl">32</span></div>
<div class="r" style="top:737px"><span class="c c-seq wh">30</span><span class="c c-code wh">301133</span><span class="c c-name zh wh">金钟股份</span><span class="c c-fl fl">Z</span><span class="c c-zf rd">3.98</span><span class="c c-price rd">27.16</span><span class="c c-chg rd">1.04</span><span class="c c-buy rd">27.15</span><span class="c c-sell rd">27.16</span><span class="c c-vol yl">52516</span><span class="c c-cur mg">630</span><span class="c c-speed rd">0.48</span><span class="c c-turn wh">17.07</span><span class="c c-open rd">26.30</span><span class="c c-high rd">27.60</span><span class="c c-low gn">25.92</span><span class="c c-prev wh">26.12</span><span class="c c-pe wh">40.97</span><span class="c c-amount cy">1.42<span class="zh">亿</span></span><span class="c c-lb rd">2.63</span><span class="c c-ind zh wh">汽车配件</span><span class="c c-reg zh wh">广东</span><span class="c c-amp wh">6.43</span><span class="c c-avg rd">26.99</span><span class="clip"><span class="c gn">25420</span></span><span class="c c-outer rd">27096</span><span class="c c-ratio rd">0.94</span><span class="c c-buyvol yl">25</span></div>
<div class="r" style="top:760px"><span class="c c-seq wh">31</span><span class="c c-code wh">300937</span><span class="c c-name zh wh">药易购</span><span class="c c-fl fl">Z</span><span class="c c-zf rd">3.88</span><span class="c c-price rd">31.58</span><span class="c c-chg rd">1.18</span><span class="c c-buy rd">31.58</span><span class="c c-sell rd">31.59</span><span class="c c-vol yl">37555</span><span class="c c-cur wh">362</span><span class="c c-speed rd">0.03</span><span class="c c-turn wh">9.13</span><span class="c c-open gn">30.15</span><span class="c c-high rd">32.13</span><span class="c c-low gn">29.98</span><span class="c c-prev wh">30.40</span><span class="c c-pe wh">23.88</span><span class="c c-amount cy">1.17<span class="zh">亿</span></span><span class="c c-lb rd">1.86</span><span class="c c-ind zh wh">医药商业</span><span class="c c-reg zh wh">四川</span><span class="c c-amp wh">7.07</span><span class="c c-avg rd">31.23</span><span class="clip"><span class="c gn">15556</span></span><span class="c c-outer rd">21999</span><span class="c c-ratio rd">0.71</span><span class="c c-buyvol yl">376</span></div>
<div class="r" style="top:783px"><span class="c c-seq wh">32</span><span class="c c-code wh">601928</span><span class="c c-name zh wh">凤凰传媒</span><span class="c c-fl fl">R</span><span class="c c-zf rd">3.87</span><span class="c c-price rd">11.00</span><span class="c c-chg rd">0.41</span><span class="c c-buy rd">11.00</span><span class="c c-sell rd">11.01</span><span class="c c-vol yl">267620</span><span class="c c-cur mg">1709</span><span class="c c-speed gn">-0.08</span><span class="c c-turn wh">1.05</span><span class="c c-open wh">10.59</span><span class="c c-high rd">11.14</span><span class="c c-low gn">10.55</span><span class="c c-prev wh">10.59</span><span class="c c-pe wh">14.49</span><span class="c c-amount cy">2.94<span class="zh">亿</span></span><span class="c c-lb rd">2.09</span><span class="c c-ind zh wh">出版业</span><span class="c c-reg zh wh">江苏</span><span class="c c-amp wh">5.57</span><span class="c c-avg rd">10.98</span><span class="clip"><span class="c gn">86430</span></span><span class="c c-outer rd">181190</span><span class="c c-ratio rd">0.48</span><span class="c c-buyvol yl">135</span></div>
<div class="r" style="top:806px"><span class="c c-seq wh">33</span><span class="c c-code wh">000711</span><span class="c c-name zh wh">*ST京蓝</span><span class="c c-zf rd">3.85</span><span class="c c-price rd">1.89</span><span class="c c-chg rd">0.07</span><span class="c c-buy rd">1.88</span><span class="c c-sell rd">1.89</span><span class="c c-vol yl">352012</span><span class="c c-cur mg">1093</span><span class="c c-speed wh">0.00</span><span class="c c-turn wh">3.58</span><span class="c c-open rd">1.83</span><span class="bx"></span><span class="c c-high rd" style="margin-right:1px">1.91</span><span class="c c-low wh">1.82</span><span class="c c-prev wh">1.82</span><span class="c c-pe wh" style="margin-right:9px">--</span><span class="c c-amount cy">6636<span class="zh">万</span></span><span class="c c-lb rd">1.89</span><span class="c c-ind zh wh">环境保护</span><span class="c c-reg zh wh">黑龙江</span><span class="c c-amp wh">4.95</span><span class="c c-avg rd">1.89</span><span class="clip"><span class="c gn">118804</span></span><span class="c c-outer rd">233208</span><span class="c c-ratio rd">0.51</span><span class="c c-buyvol yl">2415</span></div>
<div class="r" style="top:829px"><span class="c c-seq wh">34</span><span class="c c-code wh">001207</span><span class="c c-name zh wh">联科科技</span><span class="c c-zf rd">3.83</span><span class="c c-price rd">16.25</span><span class="c c-chg rd">0.60</span><span class="c c-buy rd">16.25</span><span class="c c-sell rd">16.26</span><span class="c c-vol yl">29919</span><span class="c c-cur wh">384</span><span class="c c-speed rd">0.06</span><span class="c c-turn wh">4.61</span><span class="c c-open rd">15.90</span><span class="c c-high rd">16.36</span><span class="c c-low rd">15.70</span><span class="c c-prev wh">15.65</span><span class="c c-pe wh">46.91</span><span class="c c-amount cy">4810<span class="zh">万</span></span><span class="c c-lb rd">2.33</span><span class="c c-ind zh wh">化工原料</span><span class="c c-reg zh wh">山东</span><span class="c c-amp wh">4.22</span><span class="c c-avg rd">16.08</span><span class="clip"><span class="c gn">13433</span></span><span class="c c-outer rd">16486</span><span class="c c-ratio rd">0.81</span><span class="c c-buyvol yl">110</span></div>
<div class="r" style="top:852px"><span class="c c-seq wh">35</span><span class="c c-code wh">688003</span><span class="c c-name zh wh">天准科技</span><span class="c c-fl fl">K</span><span class="c c-zf rd">3.78</span><span class="c c-price rd">43.39</span><span class="c c-chg rd">1.58</span><span class="c c-buy rd">43.39</span><span class="c c-sell rd">43.41</span><span class="c c-vol yl">32807</span><span class="c c-cur wh">251</span><span class="c c-speed gn">-0.38</span><span class="c c-turn wh">1.68</span><span class="c c-open gn">41.71</span><span class="c c-high rd">44.28</span><span class="c c-low gn">41.02</span><span class="c c-prev wh">41.81</span><span class="c c-pe wh" style="margin-right:9px">--</span><span class="c c-amount cy">1.40<span class="zh">亿</span></span><span class="c c-lb mg">3.05</span><span class="c c-ind zh wh">专用机械</span><span class="c c-reg zh wh">江苏</span><span class="c c-amp wh">7.80</span><span class="c c-avg rd">42.82</span><span class="clip"><span class="c gn">13125</span></span><span class="c c-outer rd">19682</span><span class="c c-ratio rd">0.67</span><span class="c c-buyvol yl">23</span></div>
<div class="r" style="top:875px"><span class="c c-seq wh">36</span><span class="c c-code wh">300228</span><span class="c c-name zh wh">富瑞特装</span><span class="c c-zf rd">3.67</span><span class="c c-price rd">6.22</span><span class="c c-chg rd">0.22</span><span class="c c-buy rd">6.22</span><span class="c c-sell rd">6.23</span><span class="c c-vol yl">197078</span><span class="c c-cur mg">7841</span><span class="c c-speed rd">0.32</span><span class="c c-turn wh">3.63</span><span class="c c-open rd">6.01</span><span class="c c-high rd">6.28</span><span class="c c-low gn">5.95</span><span class="c c-prev wh">6.00</span><span class="c c-pe wh">329.48</span><span class="c c-amount cy">1.21<span class="zh">亿</span></span><span class="c c-lb rd">2.75</span><span class="c c-ind zh wh">化工机械</span><span class="c c-reg zh wh">江苏</span><span class="c c-amp wh">5.50</span><span class="c c-avg rd">6.13</span><span class="clip"><span class="c gn">82074</span></span><span class="c c-outer rd">115004</span><span class="c c-ratio rd">0.71</span><span class="c c-buyvol yl">131</span></div>
<div class="r" style="top:898px"><span class="c c-seq wh">37</span><span class="c c-code wh">002995</span><span class="c c-name zh wh">天地在线</span><span class="c c-zf rd">3.62</span><span class="c c-price rd">27.20</span><span class="c c-chg rd">0.95</span><span class="c c-buy rd">27.20</span><span class="c c-sell rd">27.21</span><span class="c c-vol yl">252091</span><span class="c c-cur mg">3659</span><span class="c c-speed wh">0.00</span><span class="c c-turn wh">22.42</span><span class="c c-open gn">26.15</span><span class="c c-high rd">27.70</span><span class="c c-low gn">25.84</span><span class="c c-prev wh">26.25</span><span class="c c-pe wh" style="margin-right:9px">--</span><span class="c c-amount cy">6.81<span class="zh">亿</span></span><span class="c c-lb rd">2.88</span><span class="c c-ind zh wh">互联网</span><span class="c c-reg zh wh">北京</span><span class="c c-amp wh">7.09</span><span class="c c-avg rd">27.03</span><span class="clip"><span class="c gn">127368</span></span><span class="c c-outer rd">124723</span><span class="c c-ratio gn">1.02</span><span class="c c-buyvol yl">90</span></div>
<div class="r" style="top:921px"><span class="c c-seq wh">38</span><span class="c c-code wh">603139</span><span class="c c-name zh wh">康惠制药</span><span class="c c-zf rd">3.53</span><span class="c c-price rd">17.30</span><span class="c c-chg rd">0.59</span><span class="c c-buy rd">17.29</span><span class="c c-sell rd">17.30</span><span class="c c-vol yl">15209</span><span class="c c-cur wh">408</span><span class="c c-speed wh">0.00</span><span class="c c-turn wh">1.52</span><span class="c c-open gn">16.63</span><span class="c c-high rd">17.32</span><span class="c c-low gn">16.54</span><span class="c c-prev wh">16.71</span><span class="c c-pe wh">52.64</span><span class="c c-amount cy">2600<span class="zh">万</span></span><span class="c c-lb rd">2.14</span><span class="c c-ind zh wh">中成药</span><span class="c c-reg zh wh">陕西</span><span class="c c-amp wh">4.67</span><span class="c c-avg rd">17.10</span><span class="clip"><span class="c gn">7307</span></span><span class="c c-outer rd">7902</span><span class="c c-ratio rd">0.92</span><span class="c c-buyvol yl">42</span></div>
<div class="r" style="top:944px"><span class="c c-seq wh">39</span><span class="c c-code wh">603108</span><span class="c c-name zh wh">润达医疗</span><span class="c c-fl fl">R</span><span class="c c-zf rd">3.52</span><span class="c c-price rd">13.82</span><span class="c c-chg rd">0.47</span><span class="c c-buy rd">13.81</span><span class="c c-sell rd">13.82</span><span class="c c-vol yl">424158</span><span class="c c-cur mg">10824</span><span class="c c-speed gn">-0.06</span><span class="c c-turn wh">7.32</span><span class="c c-open wh">13.35</span><span class="c c-high rd">14.07</span><span class="c c-low gn">13.21</span><span class="c c-prev wh">13.35</span><span class="c c-pe wh">24.71</span><span class="c c-amount cy">5.82<span class="zh">亿</span></span><span class="c c-lb rd">2.48</span><span class="c c-ind zh wh">医药商业</span><span class="c c-reg zh wh">上海</span><span class="c c-amp wh">6.44</span><span class="c c-avg rd">13.72</span><span class="clip"><span class="c gn">182860</span></span><span class="c c-outer rd">241298</span><span class="c c-ratio rd">0.76</span><span class="c c-buyvol yl">891</span></div>
<div id="btabs">
<span class="bt" style="left:0;width:47px">分类<i class="tri"></i></span>
<span class="bt" style="left:48px;width:35px;color:#ff3434">自选</span>
<span class="bt" style="left:84px;width:47px">板块<i class="tri"></i></span>
<span class="bt" style="left:132px;width:47px">自定<i class="tri"></i></span>
<span class="bt g" style="left:180px;width:47px">港股<i class="tri"></i></span>
<span class="bt g" style="left:228px;width:47px">期权<i class="tri"></i></span>
<span class="bt g" style="left:276px;width:71px">期货现货<i class="tri"></i></span>
<span class="bt g" style="left:348px;width:71px">基金理财<i class="tri"></i></span>
<span class="bt g" style="left:420px;width:71px">美股环球<i class="tri"></i></span>
<span class="bt g" style="left:492px;width:71px">其它品种<i class="tri"></i></span>
<span class="abs" style="left:565px;top:1px;width:13px;height:15px;border:1px solid #20242c;background:#000"><svg style="position:absolute;left:2px;top:3px" width="7" height="8" viewBox="0 0 7 8"><path d="M6 0.5V7.5L1.5 4Z" fill="#3b4252"/></svg></span>
<span class="abs" style="left:579px;top:1px;width:38px;height:15px;background:#232830"></span>
<span class="abs" style="left:1906px;top:1px;width:13px;height:15px;border:1px solid #20242c;background:#000"><svg style="position:absolute;left:3px;top:3px" width="7" height="8" viewBox="0 0 7 8"><path d="M1 0.5V7.5L5.5 4Z" fill="#2e333e"/></svg></span>
</div>
<div id="band"></div>
<div id="status">
<span class="abs" style="left:3px;top:7px;width:15px;height:15px;border-radius:8px;background:linear-gradient(180deg,#a3aab6,#646c78)"><svg style="position:absolute;left:2.5px;top:2.5px" width="10" height="10" viewBox="0 0 10 10" fill="none" stroke="#23272f" stroke-width="1.1"><path d="M1.5 1.5L5 4.7L8.5 1.5M1.5 4.9L5 8.1L8.5 4.9"/></svg></span>
<span class="s l" style="left:26.5px">上证</span><span class="s g" style="left:54.5px">3260.62</span><span class="s g" style="left:112px">-8.21</span><span class="s g" style="left:153px">-0.25%</span><span class="s l" style="left:197px">3558亿</span>
<span class="s l" style="left:245px">深证</span><span class="s g" style="left:273.5px">11098.5</span><span class="s g" style="left:326px">-46.58</span><span class="s g" style="left:371.5px">-0.42%</span><span class="s l" style="left:415px">4431亿</span>
<span class="s l" style="left:465px">沪深</span><span class="s g" style="left:493.5px">3979.73</span><span class="s g" style="left:547px">-10.42</span><span class="s g" style="left:592px">-0.26%</span><span class="s l" style="left:635px">2026亿</span>
<span class="s l" style="left:685px">创业</span><span class="s g" style="left:713.5px">2228.91</span><span class="s g" style="left:767px">-11.86</span><span class="s g" style="left:811.5px">-0.53%</span><span class="s l" style="left:855.5px">2008亿</span>
<span class="s l" style="left:904.5px">科创</span><span class="s g" style="left:937px">965.53</span><span class="s g" style="left:990px">-3.37</span><span class="s g" style="left:1031px">-0.35%</span><span class="s l" style="left:1074.5px">457.4亿</span>
<svg class="abs" style="left:1127px;top:8px" width="105" height="14" viewBox="0 0 105 14">
<rect x="1.5" y="0.5" width="49" height="6" fill="none" stroke="#fff" stroke-width="1"/><rect x="13" y="1" width="1" height="5" fill="#fff"/><rect x="38" y="1" width="1" height="5" fill="#fff"/><rect x="14.6" y="1" width="1" height="5" fill="#700"/><rect x="15.5" y="1" width="10" height="5" fill="#f00"/><rect x="25.5" y="1" width="9.5" height="5" fill="#008a00"/>
<rect x="53.5" y="0.5" width="49" height="6" fill="none" stroke="#fff" stroke-width="1"/><rect x="65" y="1" width="1" height="5" fill="#fff"/><rect x="90" y="1" width="1" height="5" fill="#fff"/><rect x="66.7" y="1" width="1" height="5" fill="#700"/><rect x="67.7" y="1" width="9.3" height="5" fill="#f00"/><rect x="77" y="1" width="8" height="5" fill="#008a00"/>
<path d="M5 9H51M5 12H51" stroke="#009600" stroke-width="2" stroke-dasharray="6 2"/>
<path d="M57 9H103M57 12H103" stroke="#f40808" stroke-width="2" stroke-dasharray="6 2"/>
</svg>
<span class="abs" style="left:1239px;top:8px;width:15px;height:12px;border-radius:2px;background:linear-gradient(180deg,#858c98,#666d79)"><svg style="position:absolute;left:2px;top:2px" width="11" height="8" viewBox="0 0 11 8" fill="none" stroke="#23272f" stroke-width="1"><path d="M2.6 1Q0.8 4 2.6 7M8.4 1Q10.2 4 8.4 7"/><circle cx="5.5" cy="4" r="1" fill="#23272f" stroke="none"/></svg></span>
<span class="abs" style="left:1259px;top:8px;width:15px;height:12px;border-radius:2px;background:linear-gradient(180deg,#8c939f,#666d79);color:#fff;font-size:12px;line-height:13px;text-align:center">0</span>
<span class="s l" style="left:1277.5px;color:#d8dde6">已断开,点此连接</span>
<span class="s l" style="left:1754px;top:-3px;color:#d8dde6">7x24</span>
<svg class="abs" style="left:1798px;top:6.5px" width="16" height="13" viewBox="0 0 16 13"><rect x="0" y="0" width="15.5" height="12.5" rx="2" fill="#7d8593"/><path d="M3 3.2H13M3 5.6H13" stroke="#1a1d24" stroke-width="1.1" stroke-dasharray="1.2 1"/><path d="M3.5 9.3H12.5" stroke="#1a1d24" stroke-width="1.3"/></svg>
<svg class="abs" style="left:1828px;top:7px" width="16" height="14" viewBox="0 0 16 14"><rect x="0" y="0" width="15.5" height="10" rx="1.8" fill="#7d8593"/><path d="M7.7 10V12M4.2 12.3H11.3" stroke="#7d8593" stroke-width="1.2"/><path d="M2.3 5.5H5L6.2 3.5L8 7.3L9.3 5.5H13.3" stroke="#1a1d24" stroke-width="1" fill="none"/></svg>
<svg class="abs" style="left:1857px;top:5px" width="17" height="16" viewBox="0 0 17 16"><path d="M2.2 1.2Q1.2 8 6.2 10.8Q10.5 13 14.8 10.2Z" fill="#7d8593"/><path d="M8.5 6.5L11.8 3.2" stroke="#7d8593" stroke-width="1.3"/><circle cx="12.2" cy="2.8" r="1.3" fill="#7d8593"/><path d="M5.6 10.5L3.4 14.6M1.4 14.8H7.6" stroke="#7d8593" stroke-width="1.4"/></svg>
<span class="abs" style="left:1888px;top:5.5px;width:15.5px;height:15.5px;border-radius:8px;background:linear-gradient(180deg,#969dab,#666d79)"><svg style="position:absolute;left:0;top:0" width="16" height="16" viewBox="0 0 16 16"><path d="M8.5 3.8L4 8.4H7.4L6.7 12L11.2 7.3H7.8Z" fill="#1a1d24"/></svg></span>
</div>
<div id="edge"><span></span></div>

<div id="dlg">
<div class="dt"><span class="dtt">条件选股</span>
<svg class="abs" style="left:509px;top:3px" width="34" height="15" viewBox="0 0 34 15" fill="none" stroke="#f3c9cb" stroke-width="1.1"><path d="M2 6.5H12M22.5 2L31 11M31 2L22.5 11"/></svg></div>
<span class="dl" style="left:6px;top:32px">条件选股公式</span>
<div class="cb" style="left:85px;top:30px;width:284px;height:25px"><span class="cbt" style="left:4px">惊天雷XG&nbsp;&nbsp;&nbsp;&nbsp;&nbsp;&nbsp;-</span><i class="cbs" style="left:264px"></i><i class="cba" style="left:270px"></i></div>
<span class="btn" style="left:373px;top:30px;width:42px;height:23px">查找</span>
<span class="btn" style="left:420px;top:30px;width:57px;height:23px">用法注释</span>
<span class="btn" style="left:481px;top:30px;width:57px;height:23px">查看公式</span>
<div class="gb" style="left:4px;top:67px;width:210px;height:201px"></div>
<span class="dl gl" style="left:10px;top:60px">计算参数</span>
<span class="dl" style="left:11px;top:92px">无参数需要设置</span>
<span class="dl" style="left:13px;top:240px">选股周期:</span>
<div class="cb" style="left:73px;top:238px;width:128px;height:25px"><span class="cbt" style="left:4px">日线</span><i class="cbs" style="left:108px"></i><i class="cba" style="left:114px"></i></div>
<div class="gb" style="left:4px;top:280px;width:210px;height:144px"></div>
<span class="dl gl" style="left:10px;top:273px">选股范围</span>
<span class="dl" style="left:10px;top:294px">上证Ａ股 深证Ａ股</span>
<span class="btn" style="left:139px;top:289px;width:63px;height:23px">改变范围</span>
<span class="btn" style="left:223px;top:73px;width:66px;height:23px">加入条件</span>
<span class="btn" style="left:223px;top:111px;width:66px;height:23px">删除条件</span>
<span class="btn" style="left:223px;top:184px;width:66px;height:23px">引入方案</span>
<span class="btn" style="left:223px;top:222px;width:66px;height:23px">保存方案</span>
<span class="dl" style="left:303px;top:56px">选股条件列表</span>
<div class="lb" style="left:301px;top:75px;width:236px;height:174px"><div class="lbs">惊天雷XG&nbsp;&nbsp;&nbsp;日线</div></div>
<i class="rdo" style="left:302px;top:256px"><b></b></i><span class="dl dis" style="left:320px;top:253px">全部条件相与</span>
<i class="rdo" style="left:445px;top:256px"></i><span class="dl dis" style="left:463px;top:253px">全部条件相或</span>
<span class="dl" style="left:475px;top:274px;color:#f00">选股完毕.</span>
<i class="ck" style="left:223px;top:298px"></i><span class="dl" style="left:241px;top:295px">使用涨跌不定周期</span>
<div class="sk" style="left:343px;top:298px;width:194px;height:14px"></div>
<span class="dl" style="left:343px;top:320px">品种数</span><div class="sk" style="left:381px;top:321px;width:41px;height:15px"><span>5053</span></div>
<span class="dl" style="left:427px;top:320px">选中数</span><div class="sk" style="left:466px;top:321px;width:71px;height:15px"><span>85/1.7%</span></div>
<i class="ck" style="left:223px;top:349px"><svg width="11" height="11" viewBox="0 0 11 11" style="position:absolute;left:0;top:0"><path d="M1.8 5L4.3 8.2L9.2 2.3" stroke="#1aa01a" stroke-width="1.9" fill="none"/></svg></i><span class="dl" style="left:241px;top:346px">前复权数据</span>
<i class="ck" style="left:310px;top:349px"></i><span class="dl" style="left:328px;top:346px">剔除当前未交易的品种</span>
<i class="ck" style="left:457px;top:349px"></i><span class="dl" style="left:475px;top:346px">剔除ST品种</span>
<i class="ck" style="left:223px;top:378px"></i><span class="dl" style="left:241px;top:375px">时间段内满足条件</span>
<span class="btn" style="left:385px;top:372px;width:72px;height:23px">选股入板块</span>
<span class="btn" style="left:471px;top:372px;width:66px;height:23px">执行选股</span>
<span class="btn" style="left:471px;top:399px;width:66px;height:23px">关闭</span>
</div>

</div></body></html>
